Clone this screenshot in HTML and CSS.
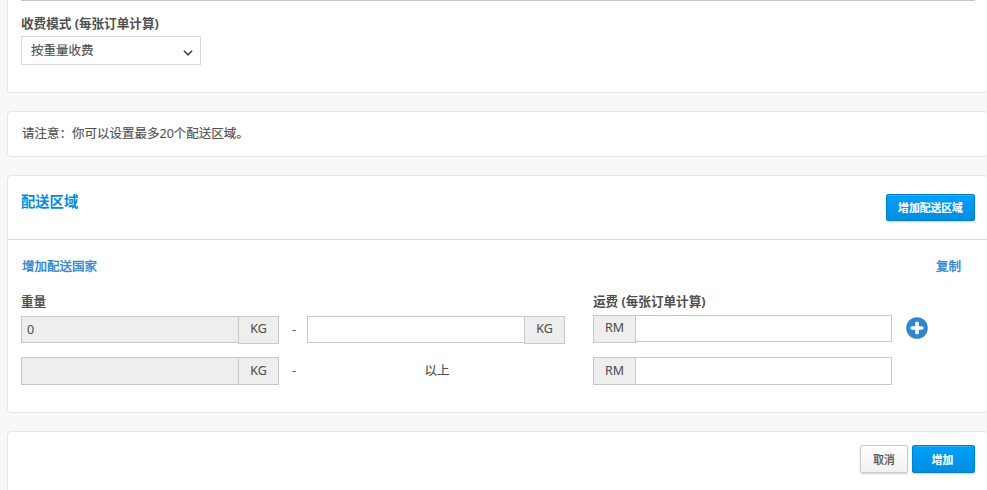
FILE: index.html
```html
<!DOCTYPE html>
<html lang="zh-CN">
<head>
<meta charset="utf-8">
<title>配送设置</title>
<link rel="stylesheet" href="styles.css">
</head>
<body>
<main class="page">
  <section class="card card-mode">
    <div class="mode-body">
      <div class="label">收费模式 (每张订单计算)</div>
      <div class="select"><span>按重量收费</span>
        <svg class="chevron" width="12" height="8" viewBox="0 0 12 8"><path d="M1.9 1.7 6 5.8l4.1-4.1" fill="none" stroke="#444" stroke-width="1.6"/></svg>
      </div>
    </div>
  </section>
  <section class="card card-note">请注意：你可以设置最多20个配送区域。</section>
  <section class="card card-zone">
    <header class="zone-head">
      <h2>配送区域</h2>
      <button class="btn btn-primary btn-zone">增加配送区域</button>
    </header>
    <div class="links"><a>增加配送国家</a><a>复制</a></div>
    <div class="grid labels">
      <div class="label">重量</div><div></div><div></div><div class="label">运费 (每张订单计算)</div>
    </div>
    <div class="grid row-first">
      <div class="group"><div class="field disabled">0</div><div class="addon">KG</div></div>
      <div class="dash">-</div>
      <div class="group"><div class="field"></div><div class="addon">KG</div></div>
      <div class="group fee"><div class="addon">RM</div><div class="field"></div></div>
      <svg class="plus" width="22" height="22" viewBox="0 0 22 22"><circle cx="11" cy="11" r="10.8" fill="#2f86d1"/><path d="M11 6.2v9.6M6.2 11h9.6" stroke="#fff" stroke-width="3.6" stroke-linecap="round"/></svg>
    </div>
    <div class="grid row-last">
      <div class="group"><div class="field disabled"></div><div class="addon">KG</div></div>
      <div class="dash">-</div>
      <div class="above">以上</div>
      <div class="group fee"><div class="addon">RM</div><div class="field"></div></div>
    </div>
  </section>
  <section class="card card-actions">
    <button class="btn btn-plain">取消</button>
    <button class="btn btn-primary btn-add">增加</button>
  </section>
</main>
</body>
</html>
```
FILE: styles.css
```css
* { box-sizing: border-box; }
html, body { height: 100%; overflow: hidden; }
body {
  margin: 0;
  background: #f8f8f8;
  color: #505050;
  font: 12.5px/18px "Open Sans", "Noto Sans CJK SC", sans-serif;
  -webkit-text-stroke: .15px currentColor;
}
.page { width: 988px; padding-left: 7px; }
.card {
  margin-bottom: 18px;
  background: #fff;
  border: 1px solid #e6e6e6;
  border-radius: 4px;
}
.card-mode {
  height: 93px;
  padding: 0 12px 0 13px;
  border-top: 0;
  border-radius: 0 0 4px 4px;
}
.mode-body { border-top: 1px solid #c8c8c8; padding-top: 14px; }
.label {
  font-size: 12.6px;
  font-weight: 700;
  white-space: nowrap;
  -webkit-text-stroke: 0;
}
.select {
  display: flex;
  align-items: center;
  justify-content: space-between;
  width: 180px;
  height: 29px;
  margin-top: 3px;
  padding: 0 6px 0 9px;
  border: 1px solid #d9d9d9;
}
.chevron { margin-top: 4px; }
.card-note { height: 46px; padding: 13px 14px; }
.card-zone { height: 238px; }
.zone-head {
  display: flex;
  justify-content: space-between;
  height: 64px;
  padding: 17px 12px 0 13px;
  border-bottom: 1px solid #d9d9d9;
}
h2 {
  margin: 0;
  color: #008ae6;
  font-size: 14.3px;
  line-height: 18px;
  font-weight: 700;
  -webkit-text-stroke: 0;
}
.btn {
  padding: 1px 0 0;
  border-radius: 2px;
  font: 700 10.8px/24px "Open Sans", "Noto Sans CJK SC", sans-serif;
  white-space: nowrap;
  box-shadow: 0 1px 2px rgba(0, 0, 0, .18);
}
.btn-primary {
  border: 1px solid #0080cc;
  background: linear-gradient(#00a1fa, #008edf);
  color: #fff;
  box-shadow: inset 0 1px 0 #26aefa, 0 1px 2px rgba(0, 0, 0, .2);
}
.btn-zone { width: 89px; height: 27px; margin-top: 1px; }
.links {
  display: flex;
  justify-content: space-between;
  padding: 18px 26px 0 14px;
  color: #2f86d1;
  -webkit-text-stroke: .4px currentColor;
}
.grid {
  display: grid;
  grid-template-columns: 258px 28px 258px 299px 22px;
  padding-left: 13px;
}
.grid > :nth-child(4) { margin-left: 28px; }
.labels { padding-top: 17px; }
.row-first { padding-top: 4px; }
.row-last { padding-top: 13px; }
.group { display: flex; align-items: flex-start; height: 28px; margin-top: 1px; }
.field { flex: 1; height: 27px; padding: 4px 5px; border: 1px solid #c8c8c8; }
.disabled { background: #eee; }
.addon {
  width: 41px;
  height: 28px;
  margin-left: -1px;
  border: 1px solid #c8c8c8;
  background: #eee;
  line-height: 24px;
  text-align: center;
}
.fee { width: 299px; margin-top: 0; }
.fee .addon { width: 43px; margin: 0 -1px 0 0; }
.row-last .group { margin-top: 0; }
.row-last .field { height: 28px; }
.row-last .addon { line-height: 26px; }
.dash { padding: 6px 0 0 13px; }
.row-last .dash { padding-top: 5px; }
.above { padding: 5px 0 0 2px; text-align: center; }
.plus { margin: 2px 0 0 42px; }
.card-actions {
  display: flex;
  justify-content: flex-end;
  gap: 4px;
  height: 80px;
  margin-bottom: 0;
  padding: 13px 12px;
}
.btn-plain {
  width: 48px;
  height: 28px;
  border: 1px solid #ccc;
  background: linear-gradient(#fff, #f1f1f1);
  color: #555;
  font-weight: 400;
  -webkit-text-stroke: .3px currentColor;
}
.btn-add { width: 63px; height: 28px; padding-right: 2px; }
```
